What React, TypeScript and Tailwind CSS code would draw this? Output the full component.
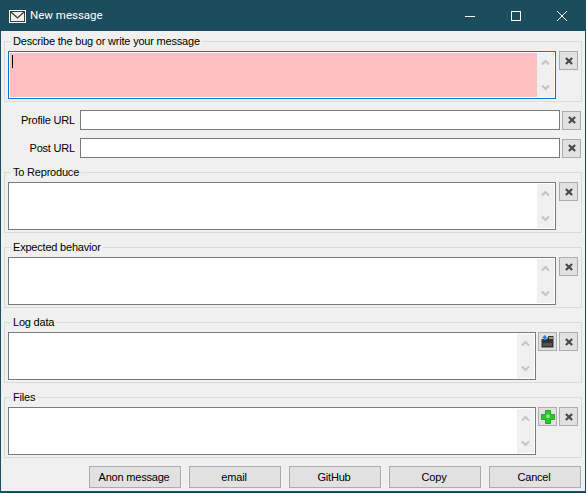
import type { ReactNode } from 'react'

function CloseIcon() {
  return (
    <svg width="8" height="8" viewBox="0 0 9 9">
      <path d="M1 1 L8 8 M8 1 L1 8" stroke="#484848" strokeWidth="2.4" />
    </svg>
  )
}

function IconButton({ children }: { children: ReactNode }) {
  return (
    <button className="w-[19px] h-[19px] shrink-0 flex items-center justify-center bg-[#e1e1e1] border border-[#adadad]">
      {children}
    </button>
  )
}

function Chevron({ up }: { up?: boolean }) {
  return (
    <svg width="9" height="7" viewBox="0 0 9 7">
      <path d={up ? 'M1 5.5 L4.5 2 L8 5.5' : 'M1 1.5 L4.5 5 L8 1.5'} fill="none" stroke="#c4c4c4" strokeWidth="2" />
    </svg>
  )
}

function TextArea({ width, active }: { width: string; active?: boolean }) {
  return (
    <div className={`${width} h-[48px] shrink-0 flex p-px bg-white border ${active ? 'border-[#0078d7]' : 'border-[#7a7a7a]'}`}>
      <div className={`flex-1 ${active ? 'bg-[#ffbfbf] pt-[2px] pl-[2px]' : 'bg-white'}`}>
        {active && <div className="w-px h-[13px] bg-black" />}
      </div>
      <div className="w-[17px] flex flex-col items-center justify-between py-[6px] bg-[#f0f0f0]">
        <Chevron up />
        <Chevron />
      </div>
    </div>
  )
}

function Group({ title, children, className }: { title: string; children: ReactNode; className: string }) {
  return (
    <fieldset className={`border border-[#dcdcdc] h-[68px] pl-[3px] ${className}`}>
      <legend className="ml-[3px] px-[2px] h-[14px] leading-[14px]">{title}</legend>
      <div className="flex gap-[2px] mt-[3px]">{children}</div>
    </fieldset>
  )
}

function UrlRow({ label }: { label: string }) {
  return (
    <div className="flex items-center">
      <label className="w-[71px] text-right">{label}</label>
      <input className="w-[480px] h-[20px] ml-[5px] bg-white border border-[#7a7a7a]" />
      <div className="ml-[2px]">
        <IconButton>
          <CloseIcon />
        </IconButton>
      </div>
    </div>
  )
}

const footerButtons = ['Anon message', 'email', 'GitHub', 'Copy', 'Cancel']

export default function App() {
  return (
    <div className="w-[586px] h-[493px] flex flex-col bg-[#f0f0f0] border border-[#1b4d5e] border-b-2 text-[11px] tracking-[-0.2px] text-black font-['Liberation_Sans',sans-serif] overflow-hidden">
      <header className="h-[30px] shrink-0 flex items-center bg-[#1b4d5e] text-white">
        <svg className="ml-[8px]" width="17" height="13" viewBox="0 0 17 13">
          <rect x="0.5" y="0.5" width="16" height="12" fill="#f0f0f0" stroke="#ffffff" />
          <rect x="1.5" y="1.5" width="14" height="10" fill="#f0f0f0" stroke="#3c3c3c" />
          <path d="M2 2 L8.5 8 L15 2" fill="none" stroke="#3c3c3c" strokeWidth="1.2" />
        </svg>
        <span className="ml-[4px] text-[11.5px] tracking-normal font-['Roboto',sans-serif]">New message</span>
        <div className="ml-auto flex">
          <div className="w-[46px] h-[30px] flex items-center justify-center">
            <div className="w-[10px] h-px bg-white" />
          </div>
          <div className="w-[46px] h-[30px] flex items-center justify-center">
            <div className="w-[10px] h-[10px] border border-white" />
          </div>
          <div className="w-[46px] h-[30px] flex items-center justify-center">
            <svg width="10" height="10" viewBox="0 0 10 10">
              <path d="M0 0 L10 10 M10 0 L0 10" stroke="white" strokeWidth="1" />
            </svg>
          </div>
        </div>
      </header>

      <main className="flex-1 flex flex-col pl-[3px] pr-[3px]">
        <Group title="Describe the bug or write your message" className="mt-[3px]">
          <TextArea width="w-[548px]" active />
          <div className="ml-px">
            <IconButton>
              <CloseIcon />
            </IconButton>
          </div>
        </Group>

        <div className="flex flex-col gap-[8px] mt-[8px]">
          <UrlRow label="Profile URL" />
          <UrlRow label="Post URL" />
        </div>

        <Group title="To Reproduce" className="mt-[7px]">
          <TextArea width="w-[548px]" />
          <div className="ml-px">
            <IconButton>
              <CloseIcon />
            </IconButton>
          </div>
        </Group>

        <Group title="Expected behavior" className="mt-[7px]">
          <TextArea width="w-[548px]" />
          <div className="ml-px">
            <IconButton>
              <CloseIcon />
            </IconButton>
          </div>
        </Group>

        <Group title="Log data" className="mt-[7px]">
          <TextArea width="w-[528px]" />
          <IconButton>
            <svg width="13" height="13" viewBox="0 0 13 13">
              <path d="M0.5 4 H6 L7.5 1 H12.5 V12.5 H0.5 Z" fill="#333333" />
              <path d="M8 2 H12 V4 H8 Z" fill="#9a9a9a" />
              <path d="M2.5 5 V3 H1 L3.8 0 L6.6 3 H5 V5 Z" fill="#2a86d8" />
              <rect x="2" y="8" width="9" height="3" fill="#555555" />
            </svg>
          </IconButton>
          <IconButton>
            <CloseIcon />
          </IconButton>
        </Group>

        <Group title="Files" className="mt-[7px]">
          <TextArea width="w-[528px]" />
          <IconButton>
            <svg width="14" height="14" viewBox="0 0 14 14">
              <path d="M4.5 0.5 H9.5 V4.5 H13.5 V9.5 H9.5 V13.5 H4.5 V9.5 H0.5 V4.5 H4.5 Z" fill="#2cc82c" stroke="#22a822" strokeWidth="1" />
              <path d="M5.5 4.5 H8.5 V8 H5.5 Z" fill="#86f086" />
            </svg>
          </IconButton>
          <IconButton>
            <CloseIcon />
          </IconButton>
        </Group>

        <div className="flex justify-end gap-[8px] mt-[8px] pr-px">
          {footerButtons.map((label) => (
            <button key={label} className="w-[92px] h-[22px] pr-[2px] bg-[#e1e1e1] border border-[#adadad]">
              {label}
            </button>
          ))}
        </div>
      </main>
    </div>
  )
}
